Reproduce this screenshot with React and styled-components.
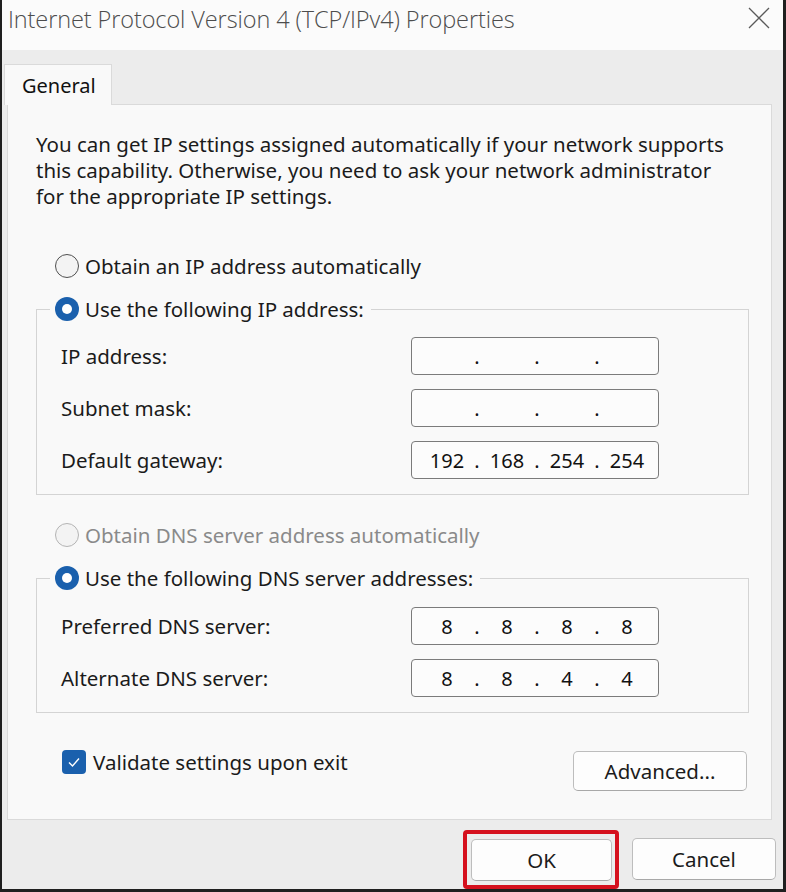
import React from 'react'
import styled, { createGlobalStyle } from 'styled-components'

const Global = createGlobalStyle`
  html, body {
    margin: 0;
    padding: 0;
    background: #ececec;
  }
  body {
    font-family: "Noto Sans", "Open Sans", sans-serif;
    color: #1b1b1b;
  }
  * { box-sizing: border-box; }
`

const Window = styled.div`
  width: 786px;
  height: 892px;
  display: flex;
  flex-direction: column;
  background: #ececec;
  border-left: 2px solid #1f1f1f;
  border-right: 3px solid #1f1f1f;
  border-bottom: 3px solid #1f1f1f;
`

const TitleBar = styled.div`
  height: 50px;
  flex-shrink: 0;
  display: flex;
  align-items: flex-start;
  justify-content: space-between;
  padding: 3px 9px 0 6px;
  background: #fbfbfb;
`

const Title = styled.div`
  font-family: "Open Sans", "Noto Sans", sans-serif;
  font-weight: 300;
  font-size: 23.5px;
  line-height: 32px;
  color: #4d4d4d;
  letter-spacing: -0.1px;
`

const Close = styled.button`
  width: 30px;
  height: 30px;
  border: 0;
  padding: 0;
  background: transparent;
  display: flex;
  align-items: center;
  justify-content: center;
`

const Body = styled.div`
  flex: 1;
  display: flex;
  flex-direction: column;
  padding: 14px 11px 0 5px;
`

const TabStrip = styled.div`
  display: flex;
  height: 40px;
  flex-shrink: 0;
`

const Tab = styled.div`
  position: relative;
  z-index: 1;
  margin-left: -3px;
  width: 108px;
  height: 41px;
  padding-left: 17px;
  display: flex;
  align-items: center;
  font-size: 20px;
  color: #111;
  background: #f9f9f9;
  border: 1px solid #dadada;
  border-bottom: 0;
`

const Panel = styled.div`
  flex: 1;
  display: flex;
  flex-direction: column;
  padding: 26px 22px 0 28px;
  background: #f9f9f9;
  border: 1px solid #dadada;
`

const Intro = styled.p`
  margin: 0;
  font-size: 20.5px;
  line-height: 26px;
  white-space: nowrap;
  color: #1b1b1b;
`

const OptionRow = styled.label`
  display: flex;
  align-items: center;
  gap: 6px;
  height: 26px;
  margin-top: ${p => p.$top}px;
  margin-left: 19px;
  font-size: 20.5px;
  color: ${p => (p.$disabled ? '#8a8a8a' : '#1b1b1b')};
`

const Radio = styled.span`
  width: 24px;
  height: 24px;
  border-radius: 50%;
  flex-shrink: 0;
  display: flex;
  align-items: center;
  justify-content: center;
  background: ${p => (p.$checked ? '#1a60ad' : '#f3f3f3')};
  border: ${p => (p.$checked ? '0' : p.$disabled ? '1.5px solid #b4b4b4' : '1.5px solid #505050')};

  &::after {
    content: '';
    display: ${p => (p.$checked ? 'block' : 'none')};
    width: 10px;
    height: 10px;
    border-radius: 50%;
    background: #fff;
  }
`

const Group = styled.fieldset`
  margin: ${p => p.$top}px 0 0 0;
  padding: ${p => p.$padTop}px 0 15px 24px;
  border: 1px solid #d4d4d4;
  min-inline-size: 0;
`

const Legend = styled.legend`
  margin-left: -11px;
  padding: 0 7px 0 5px;
  height: 26px;
  display: flex;
  align-items: center;
  gap: 6px;
  font-size: 20.5px;
  color: #1b1b1b;
`

const Fields = styled.div`
  display: grid;
  grid-template-columns: 350px 248px;
  row-gap: 14px;
  align-items: center;
`

const FieldLabel = styled.span`
  font-size: 20.5px;
  color: #1b1b1b;
`

const IpBox = styled.div`
  height: 38px;
  display: flex;
  align-items: center;
  padding-left: 11px;
  background: #fcfcfc;
  border: 1.5px solid #7b7b7b;
  border-radius: 4px;
  font-size: 20px;
  color: #111;
`

const Octet = styled.span`
  width: 48px;
  text-align: center;
`

const Dot = styled.span`
  width: 12px;
  text-align: center;
`

const BottomRow = styled.div`
  display: flex;
  justify-content: space-between;
  align-items: flex-start;
  margin-top: 37px;
  padding: 0 2px 0 26px;
`

const CheckRow = styled.label`
  display: flex;
  align-items: center;
  gap: 7px;
  height: 24px;
  font-size: 20.5px;
  color: #1b1b1b;
`

const CheckBox = styled.span`
  width: 24px;
  height: 24px;
  border-radius: 4px;
  background: #1a60ad;
  display: flex;
  align-items: center;
  justify-content: center;
`

const Button = styled.button`
  width: ${p => p.$w}px;
  height: ${p => p.$h}px;
  margin-top: ${p => p.$top || 0}px;
  font-family: "Noto Sans", "Open Sans", sans-serif;
  font-size: 20.5px;
  color: #1b1b1b;
  background: #fdfdfd;
  border: 1px solid #bdbdbd;
  border-bottom-color: #a8a8a8;
  border-radius: 5px;
  padding: 0;
`

const Footer = styled.div`
  height: 69px;
  flex-shrink: 0;
  display: flex;
  justify-content: flex-end;
  align-items: center;
  gap: 13px;
  padding: 9px 0 0 0;
  margin-right: -4px;
`

const Highlight = styled.div`
  border: 4px solid #d5101d;
  border-radius: 4px;
  padding: 5px 3px 4px 4px;
`

function IpField({ value }) {
  const parts = value ? value.split('.') : ['', '', '', '']
  return (
    <IpBox>
      {parts.map((p, i) => (
        <React.Fragment key={i}>
          <Octet>{p}</Octet>
          {i < 3 && <Dot>.</Dot>}
        </React.Fragment>
      ))}
    </IpBox>
  )
}

export default function App() {
  return (
    <Window>
      <Global />
      <TitleBar>
        <Title>Internet Protocol Version 4 (TCP/IPv4) Properties</Title>
        <Close aria-label="Close">
          <svg width="22" height="22" viewBox="0 0 22 22">
            <path d="M1 1 L21 21 M21 1 L1 21" stroke="#5a5a5a" strokeWidth="1.3" fill="none" />
          </svg>
        </Close>
      </TitleBar>
      <Body>
        <TabStrip>
          <Tab>General</Tab>
        </TabStrip>
        <Panel>
          <Intro>
            You can get IP settings assigned automatically if your network supports<br />
            this capability. Otherwise, you need to ask your network administrator<br />
            for the appropriate IP settings.
          </Intro>

          <OptionRow $top={44}>
            <Radio />
            Obtain an IP address automatically
          </OptionRow>

          <Group $top={17} $padTop={15}>
            <Legend>
              <Radio $checked />
              Use the following IP address:
            </Legend>
            <Fields>
              <FieldLabel>IP address:</FieldLabel>
              <IpField />
              <FieldLabel>Subnet mask:</FieldLabel>
              <IpField />
              <FieldLabel>Default gateway:</FieldLabel>
              <IpField value="192.168.254.254" />
            </Fields>
          </Group>

          <OptionRow $top={27} $disabled>
            <Radio $disabled />
            Obtain DNS server address automatically
          </OptionRow>

          <Group $top={17} $padTop={16}>
            <Legend>
              <Radio $checked />
              Use the following DNS server addresses:
            </Legend>
            <Fields>
              <FieldLabel>Preferred DNS server:</FieldLabel>
              <IpField value="8.8.8.8" />
              <FieldLabel>Alternate DNS server:</FieldLabel>
              <IpField value="8.8.4.4" />
            </Fields>
          </Group>

          <BottomRow>
            <CheckRow>
              <CheckBox>
                <svg width="16" height="16" viewBox="0 0 16 16">
                  <path d="M3 8.5 L6.5 12 L13 4.5" stroke="#fff" strokeWidth="1.4" fill="none" />
                </svg>
              </CheckBox>
              Validate settings upon exit
            </CheckRow>
            <Button $w={174} $h={40} $top={1}>Advanced...</Button>
          </BottomRow>
        </Panel>
        <Footer>
          <Highlight>
            <Button $w={141} $h={42}>OK</Button>
          </Highlight>
          <Button $w={144} $h={42}>Cancel</Button>
        </Footer>
      </Body>
    </Window>
  )
}
